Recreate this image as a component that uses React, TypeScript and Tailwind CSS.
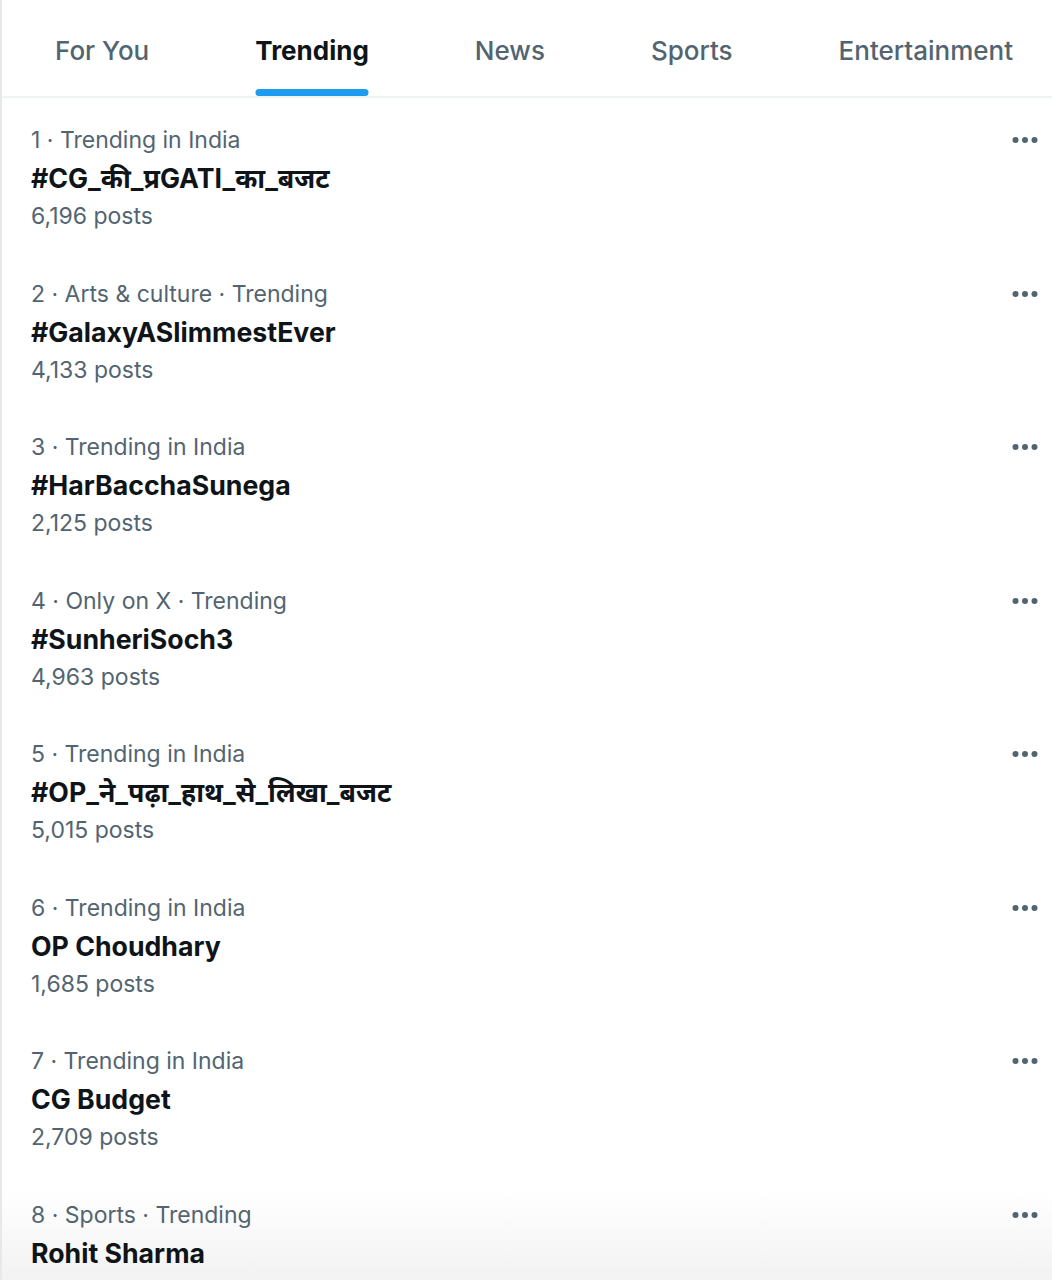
const tabs = ['For You', 'Trending', 'News', 'Sports', 'Entertainment'];

const trends = [
  { meta: '1 · Trending in India', title: '#CG_की_प्रGATI_का_बजट', posts: '6,196 posts' },
  { meta: '2 · Arts & culture · Trending', title: '#GalaxyASlimmestEver', posts: '4,133 posts' },
  { meta: '3 · Trending in India', title: '#HarBacchaSunega', posts: '2,125 posts' },
  { meta: '4 · Only on X · Trending', title: '#SunheriSoch3', posts: '4,963 posts' },
  { meta: '5 · Trending in India', title: '#OP_ने_पढ़ा_हाथ_से_लिखा_बजट', posts: '5,015 posts' },
  { meta: '6 · Trending in India', title: 'OP Choudhary', posts: '1,685 posts' },
  { meta: '7 · Trending in India', title: 'CG Budget', posts: '2,709 posts' },
  { meta: '8 · Sports · Trending', title: 'Rohit Sharma', posts: '' },
];

function Dots() {
  return (
    <svg width="26" height="8" viewBox="0 0 26 8" className="fill-[#536471]">
      <circle cx="3.5" cy="4" r="3" />
      <circle cx="13" cy="4" r="3" />
      <circle cx="22.5" cy="4" r="3" />
    </svg>
  );
}

export default function App() {
  return (
    <div
      className="h-[1280px] w-[1052px] overflow-hidden bg-white border-l-2 border-[#e6e9ea]"
      style={{ fontFamily: 'Inter, "Noto Sans", "Noto Sans Devanagari", sans-serif' }}
    >
      {/* tab bar */}
      <div className="flex h-[98px] overflow-hidden border-b-2 border-[#eff3f4]">
        {tabs.map((t, i) => (
          <div key={t} className="relative flex shrink-0 items-center justify-center px-[53px] pt-[4px]">
            <span className={`whitespace-nowrap text-[26px] ${i === 1 ? 'font-bold text-[#0f1419]' : 'font-medium text-[#536471]'}`}>
              {t}
            </span>
            {i === 1 && (
              <div className="absolute bottom-0 left-1/2 h-[7px] w-[113px] -translate-x-1/2 rounded-full bg-[#1d9bf0]" />
            )}
          </div>
        ))}
      </div>

      {/* trends */}
      <div className="pt-[1px]">
        {trends.map((tr, i) => (
          <div
            key={tr.meta}
            className={`flex h-[153.5px] items-start justify-between pl-[29px] pr-[14px] pt-[22px] ${
              i === trends.length - 1 ? 'bg-linear-to-b from-white from-[12%] to-[#ebebeb]' : ''
            }`}
          >
            <div className="flex flex-col">
              <span className="leading-[38px] text-[23px] text-[#536471]">{tr.meta}</span>
              <span className="leading-[38px] text-[26.7px] font-bold text-[#0f1419]">{tr.title}</span>
              <span className="leading-[38px] text-[23px] text-[#536471]">{tr.posts}</span>
            </div>
            <div className="pt-[15px]">
              <Dots />
            </div>
          </div>
        ))}
      </div>
    </div>
  );
}
